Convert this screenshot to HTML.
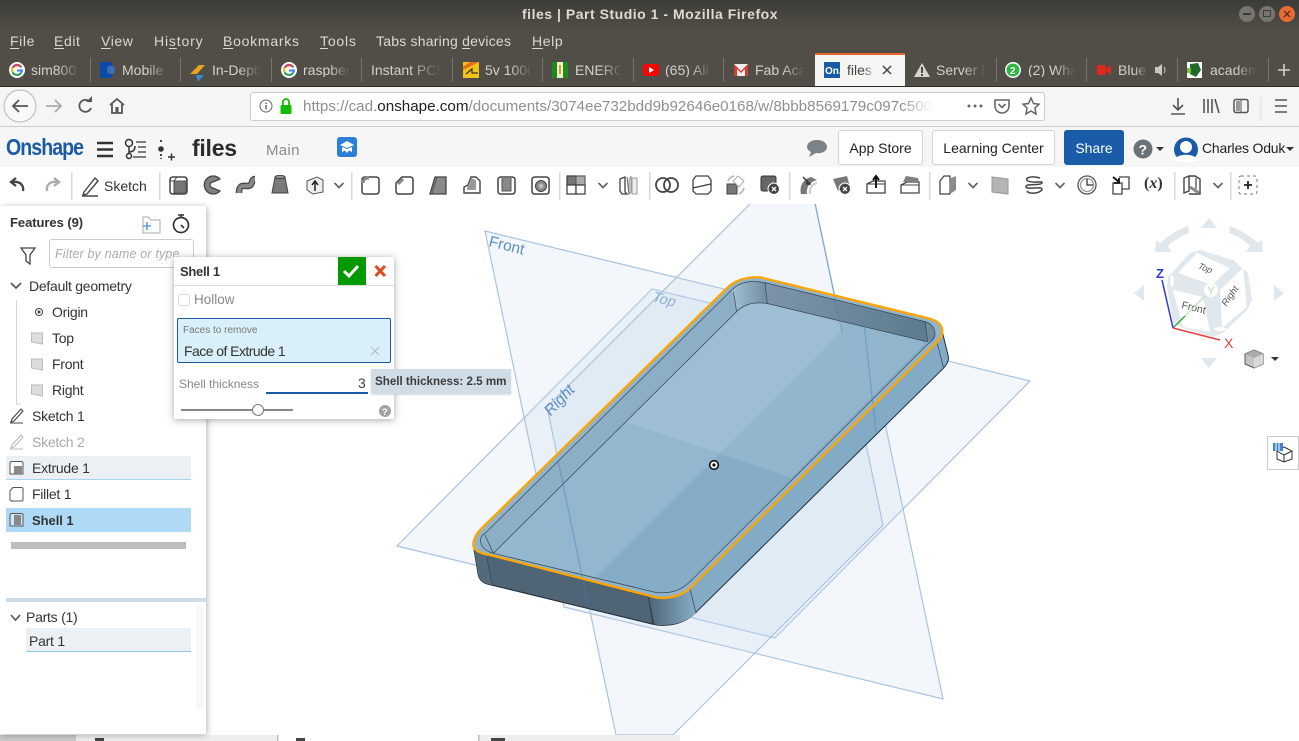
<!DOCTYPE html>
<html lang="en"><head><meta charset="utf-8"><title>files | Part Studio 1 - Mozilla Firefox</title>
<style>
html,body{margin:0;padding:0;width:1299px;height:741px;overflow:hidden;background:#fff;font-family:"Liberation Sans",sans-serif}
#w{position:relative;width:1299px;height:741px;overflow:hidden}
.a,.t{position:absolute}
.t{white-space:nowrap;line-height:1}
.m{color:#dcd9d0;font-size:14px;top:34px;letter-spacing:.6px}
.m u{text-decoration:underline;text-underline-offset:2px}
.tb{color:#d4d1c8;font-size:14px;top:63px;overflow:hidden;-webkit-mask-image:linear-gradient(90deg,#000 55%,transparent);mask-image:linear-gradient(90deg,#000 55%,transparent)}
.sep{position:absolute;top:58px;height:24px;width:1px;background:#77756d}
.f{font-size:14px;color:#333;letter-spacing:-.25px}
.r{position:absolute;background:#ebf0f5}
svg{position:absolute;overflow:visible}
.btn{position:absolute;top:130px;height:35px;box-sizing:border-box;border:1px solid #d3d3d3;border-radius:3px;background:#fff;color:#222;font-size:14px;text-align:center;line-height:34px}
</style></head><body><div id="w">

<!-- VIEWPORT -->
<svg style="left:0;top:0;overflow:hidden" width="1299" height="741" viewBox="0 0 1299 741">
<defs>
<clipPath id="vc"><rect x="0" y="204" width="1299" height="531"/></clipPath>
<clipPath id="fl"><path d="M100 880L830 155C850 135 875 125 920 130L1400 245L690 960C660 995 630 1000 590 998Z"/></clipPath>
<linearGradient id="c1" x1="0" x2="1" y1="0" y2="0"><stop offset="0" stop-color="#4f6475"/><stop offset="1" stop-color="#86aec8"/></linearGradient>
<linearGradient id="c2" x1="0" x2="1" y1="0" y2="0"><stop offset="0" stop-color="#a6c3d5"/><stop offset="1" stop-color="#6f8ca1"/></linearGradient>
<linearGradient id="c3" x1="0" x2="1" y1="0" y2="0"><stop offset="0" stop-color="#7d94a8"/><stop offset="1" stop-color="#5c7b8f"/></linearGradient>
</defs>
<g clip-path="url(#vc)">
<g fill="#c4d5ea" fill-opacity=".2" stroke="#a9c3e0" stroke-width="1.2">
<path d="M397 546L775 638L1030 381L652 289Z"/>
<path d="M485 231L864 323L943 699L564 607Z"/>
<path d="M547 407L804 150L883 525L673 735L616 735Z"/>
</g>
<g font-family="Liberation Sans,sans-serif" font-size="15.5" fill="#5d8fc6">
<text transform="translate(488 246) rotate(14)">Front</text>
<text transform="translate(651 301) rotate(14) skewX(-12)" font-size="14.5" fill="#8fb0d4">Top</text>
<text transform="translate(550 417) rotate(-46) skewX(-8)" font-size="15.5">Right</text>
</g>
<g transform="translate(460 260) scale(.33333)">
<path d="M40 855L55 945C60 965 75 972 95 975L590 1095C640 1100 680 1085 705 1060L1450 325C1462 312 1467 300 1465 290L1447 215L690 960L565 1010Z" fill="#83abc6" stroke="#1f2d38" stroke-width="3"/>
<path d="M40 855L55 945C60 965 75 972 95 975L580 1093L565 1010L90 885Z" fill="#4f6475" stroke="#1f2d38" stroke-width="3"/>
<path d="M565 1010L582 1093C625 1100 675 1090 708 1060L690 985Z" fill="url(#c1)"/>
<path d="M40 855L55 945C60 965 75 972 95 975L80 885Z" fill="#54697a"/>
<path d="M40 855C40 835 50 820 65 805L800 85C825 60 860 50 900 52L1405 175C1435 182 1447 195 1447 215C1447 228 1440 238 1425 252L695 980C670 1005 630 1018 590 1013L90 885C60 880 40 870 40 855Z" fill="#92b3c8"/>
<path d="M62 845C60 835 65 825 75 820L815 90C840 65 870 60 915 68L1395 185C1415 190 1425 205 1425 222C1425 232 1420 240 1400 255L690 965C660 995 630 1000 590 998L100 880C80 875 62 860 62 845Z" fill="#8dafc6"/>
<path d="M100 880L830 155C850 135 875 125 920 130L1400 245L690 960C660 995 630 1000 590 998Z" fill="#85adc8"/>
<g clip-path="url(#fl)">
<path d="M0 300L450 470L1075 680L1500 100L800 0Z" fill="#fff" fill-opacity=".1"/>
<path d="M1145 215L400 960L0 960L0 0L1145 0Z" fill="#fff" fill-opacity=".12"/>
</g>
<path d="M915 68L1395 185L1403 245L920 130Z" fill="url(#c3)"/>
<path d="M815 90C840 65 870 60 915 68L920 130C880 125 850 135 830 155Z" fill="url(#c2)"/>
<path d="M1395 185C1415 190 1425 205 1425 222C1425 232 1420 240 1400 248Z" fill="#6e8a9e"/>
<g fill="none" stroke="#34475a" stroke-width="2.200">
<path d="M62 845C60 835 65 825 75 820L815 90C840 65 870 60 915 68L1395 185C1415 190 1425 205 1425 222C1425 232 1420 240 1400 255L690 965C660 995 630 1000 590 998L100 880C80 875 62 860 62 845Z"/>
<path d="M100 880L830 155C850 135 875 125 920 130L1400 245"/>
<path d="M820 95L830 155M915 68L922 130M1395 185L1403 245M75 825L100 880M80 890L97 975M565 1010L582 1093M690 985L708 1060M1432 250L1450 322"/>
</g>
</g>
<g stroke="#3f7cc0" stroke-opacity=".42" stroke-width="1.2" fill="none">
<path d="M558 460L588 605M815 204L842 332M864 323L876 432"/>
</g>
<path transform="translate(460 260) scale(.33333)" d="M40 855C40 835 50 820 65 805L800 85C825 60 860 50 900 52L1405 175C1435 182 1447 195 1447 215C1447 228 1440 238 1425 252L695 980C670 1005 630 1018 590 1013L90 885C60 880 40 870 40 855Z" fill="none" stroke="#ffa500" stroke-width="7"/>
<circle cx="714" cy="465" r="4.3" fill="#fff" stroke="#111" stroke-width="1.6"/><circle cx="714" cy="465" r="1.6" fill="#111"/>

<!-- view cube -->
<g fill="#e0e8ee">
<path d="M1209 218L1217 228H1201Z"/><path d="M1134 293L1144 285V301Z"/><path d="M1284 293L1274 285V301Z"/><path d="M1209 368L1201 358H1217Z"/>
<path d="M1155 252L1156 240L1160 243C1170 234 1180 229 1188 226L1189 233C1181 236 1174 240 1168 246L1172 252Z"/>
<path d="M1263 252L1262 240L1258 243C1248 234 1238 229 1230 226L1229 233C1237 236 1244 240 1250 246L1246 252Z"/>
<path d="M1190 253L1200 250L1233 260L1248 273L1252 300L1247 310L1223 333L1213 337L1180 327L1173 323L1167 287L1168 277Z"/>
</g>
<g fill="#fff">
<path d="M1197 253L1230 268L1212 285L1178 273Z"/>
<path d="M1173 290L1203 297L1210 332L1183 327Z"/>
<path d="M1220 290L1243 268L1247 307L1222 328Z"/>
<circle cx="1211" cy="290" r="7"/>
<ellipse cx="1172" cy="281" rx="2" ry="6"/><ellipse cx="1220" cy="329" rx="6" ry="2"/><ellipse cx="1239" cy="262" rx="2" ry="6" transform="rotate(-30 1239 262)"/>
</g>
<g font-family="Liberation Sans,sans-serif" fill="#555">
<text transform="translate(1197 268) rotate(22) skewX(-12)" font-size="9">Top</text>
<text transform="translate(1181 308) rotate(14)" font-size="10.5">Front</text>
<text transform="translate(1226 307) rotate(-55) skewX(-8)" font-size="9.5">Right</text>
</g>
<path d="M1173 328L1205 296" stroke="#b6e3b0" stroke-width="1.2"/><path d="M1173 328L1185 316" stroke="#34b030" stroke-width="1.4"/>
<path d="M1173 328L1162 280" stroke="#3038d8" stroke-width="1.5"/><path d="M1173 328L1220 340" stroke="#e84040" stroke-width="1.5"/>
<g font-family="Liberation Sans,sans-serif" font-size="13" font-weight="bold">
<text x="1156" y="278" fill="#3038d8">Z</text><text x="1224" y="348" fill="#e84040" font-weight="normal" font-size="14">X</text><text x="1207" y="295" fill="#b6e3b0" font-weight="normal" font-size="12">Y</text>
</g>
<path d="M1254 350L1263 354V364L1254 368L1245 364V354Z" fill="#c4c4c4" stroke="#555"/><path d="M1254 358L1263 354V364L1254 368Z" fill="#d8d8d8"/><path d="M1245 354L1254 350L1263 354L1254 358Z" fill="#aaa"/>
<path d="M1271 357H1279L1275 361Z" fill="#333"/>
</g>

<!-- bottom tabs -->
<rect x="0" y="735" width="76" height="6" fill="#c9c9c9"/><rect x="76" y="735" width="201" height="6" fill="#eee"/><rect x="277" y="735" width="1.5" height="6" fill="#bbb"/><rect x="478" y="735" width="202" height="6" fill="#eee"/><rect x="478" y="735" width="1.5" height="6" fill="#bbb"/>
<rect x="95" y="738" width="9" height="3" fill="#444"/><rect x="296" y="738" width="9" height="3" fill="#444"/><rect x="491" y="738" width="14" height="3" fill="#444"/>
<rect x="1267.500" y="436.500" width="31" height="33" fill="#fff" stroke="#ccc"/>
<g fill="none" stroke="#333"><path d="M1277 451L1284 447L1292 451V459L1284 462L1277 459ZM1277 451L1284 455L1292 451M1284 455V462"/></g>
<rect x="1273" y="443" width="10" height="8" fill="#3f85cc"/><path d="M1276 443V451M1279 443V451" stroke="#fff"/>
</svg>

<!-- FIREFOX CHROME -->
<div class="a" style="left:0;top:0;width:1299px;height:87px;background:linear-gradient(#3c3b37,#504e46 30px,#504e46)"></div>
<div class="t" style="left:522px;top:7px;font-size:14px;font-weight:bold;color:#dfdbd2;letter-spacing:.52px">files | Part Studio 1 - Mozilla Firefox</div>
<svg style="left:1230px;top:4px" width="69" height="20">
<circle cx="17" cy="10" r="8" fill="#77756f"/><rect x="13" y="9" width="8" height="2" fill="#3d3c38"/>
<circle cx="37" cy="10" r="8" fill="#77756f"/><rect x="33.500" y="6.500" width="7" height="6" fill="none" stroke="#3d3c38"/>
<circle cx="57" cy="10" r="8" fill="#ea6a35"/><path d="M54 7L60 13M60 7L54 13" stroke="#4a2212" stroke-width="1.2"/>
</svg>
<div class="t m" style="left:10px"><u>F</u>ile</div>
<div class="t m" style="left:54px"><u>E</u>dit</div>
<div class="t m" style="left:101px"><u>V</u>iew</div>
<div class="t m" style="left:154px;letter-spacing:.85px">Hi<u>s</u>tory</div>
<div class="t m" style="left:223px;letter-spacing:.75px"><u>B</u>ookmarks</div>
<div class="t m" style="left:320px;letter-spacing:.8px"><u>T</u>ools</div>
<div class="t m" style="left:376px;letter-spacing:.22px">Tabs sharing <u>d</u>evices</div>
<div class="t m" style="left:532px"><u>H</u>elp</div>

<!-- tabs -->
<div class="sep" style="left:90px"></div><div class="sep" style="left:180px"></div><div class="sep" style="left:271px"></div><div class="sep" style="left:361px"></div><div class="sep" style="left:452px"></div><div class="sep" style="left:542px"></div><div class="sep" style="left:633px"></div><div class="sep" style="left:723px"></div><div class="sep" style="left:996px"></div><div class="sep" style="left:1086px"></div><div class="sep" style="left:1177px"></div><div class="sep" style="left:1268px"></div>
<div class="a" style="left:815px;top:53px;width:90px;height:34px;background:#f5f5f4;border-top:2px solid #e8642f;box-sizing:border-box"></div>
<div class="t tb" style="left:31px;width:49px">sim800 x</div>
<div class="t tb" style="left:122px;width:47px">Mobile x</div>
<div class="t tb" style="left:212px;width:49px">In-Depth</div>
<div class="t tb" style="left:303px;width:47px">raspberry</div>
<div class="t tb" style="left:371px;width:70px">Instant PCB</div>
<div class="t tb" style="left:485px;width:47px">5v 1000</div>
<div class="t tb" style="left:575px;width:47px">ENERGY</div>
<div class="t tb" style="left:665px;width:47px">(65) Ali</div>
<div class="t tb" style="left:755px;width:50px">Fab Acad</div>
<div class="t tb" style="left:847px;width:28px;color:#444;-webkit-mask-image:linear-gradient(90deg,#000 60%,transparent);mask-image:linear-gradient(90deg,#000 60%,transparent)">files</div>
<div class="t tb" style="left:936px;width:50px">Server N</div>
<div class="t tb" style="left:1028px;width:48px">(2) What</div>
<div class="t tb" style="left:1118px;width:30px">Blue J</div>
<div class="t tb" style="left:1210px;width:46px">academy</div>
<svg style="left:0;top:50px" width="1299" height="37">
<g fill="none" stroke-width="3">
<g id="g"><circle cx="17" cy="20" r="8" fill="#fff" stroke="none"/><path d="M21.500 17.500A5 5 0 1 0 22 20.500H17" stroke="#4285f4" stroke-width="2"/><path d="M13 17.500A5 5 0 0 1 21 17" stroke="#ea4335" stroke-width="2"/><path d="M12.600 22.500A5 5 0 0 1 12.600 17.500" stroke="#fbbc05" stroke-width="2"/><path d="M12.600 22.500A5 5 0 0 0 21 23" stroke="#34a853" stroke-width="2"/></g>
<use href="#g" x="272"/>
</g>
<rect x="100" y="12" width="12" height="16" fill="#0b4aa8"/><rect x="107" y="16" width="8" height="8" rx="3" fill="#3a6fb5"/>
<path d="M190 24L199 15H205L197 24Z" fill="#e8a21f"/><path d="M196 25H204L198 32Z" fill="#3a8ad0"/>
<rect x="463" y="12" width="16" height="16" fill="#f3c21c"/><path d="M463 28V20L479 12H470L463 17Z" fill="#e86a1a"/><path d="M466 24L472 19V23H478" stroke="#111" fill="none"/>
<rect x="552" y="12" width="16" height="16" fill="#1b8c1b"/><rect x="557" y="12" width="6" height="16" fill="#f5f1d0"/><rect x="559" y="15" width="2" height="9" fill="#c9a520"/>
<rect x="643" y="14" width="16" height="12" rx="3" fill="#f00"/><path d="M649 17L654 20L649 23Z" fill="#fff"/>
<rect x="734" y="14" width="14" height="12" fill="#eee"/><path d="M734 14L741 21L748 14V26H745V19L741 23L737 19V26H734Z" fill="#d43d30"/>
<rect x="824" y="12" width="16" height="16" fill="#1a5ba6"/><text x="825" y="24" font-family="Liberation Sans,sans-serif" font-weight="bold" font-size="10" fill="#fff">On.</text>
<path d="M883 16L891 24M891 16L883 24" stroke="#444" stroke-width="1.500"/>
<path d="M922 13L930 27H914Z" fill="#d8d5cc"/><rect x="921" y="17" width="2" height="6" fill="#4f4d46"/><rect x="921" y="24" width="2" height="2" fill="#4f4d46"/>
<circle cx="1013" cy="20" r="8" fill="#fff"/><circle cx="1013" cy="20" r="6.500" fill="#2cb742"/><text x="1010" y="24" font-family="Liberation Sans,sans-serif" font-weight="bold" font-size="10" fill="#fff">2</text>
<rect x="1097" y="15" width="9" height="10" fill="#d92a20"/><path d="M1106 19L1111 15V25L1106 21Z" fill="#d92a20"/>
<path d="M1155 17H1158L1162 14V26L1158 23H1155Z" fill="#c9c6be"/><path d="M1164 17Q1166 20 1164 23" stroke="#c9c6be" fill="none"/>
<rect x="1187" y="12" width="15" height="16" fill="#fff"/><path d="M1190 14L1198 13L1201 20L1196 27L1190 24Z" fill="#1d6b2c"/><path d="M1187 18H1191V23H1187Z" fill="#7fbe3d"/>
<path d="M1278 20H1290M1284 14V26" stroke="#d4d1c8" stroke-width="1.600"/>
</svg>

<!-- nav bar -->
<div class="a" style="left:0;top:86px;width:1299px;height:41px;background:#f5f5f4;border-top:1px solid #2c2b28;border-bottom:1px solid #ccc;box-sizing:border-box"></div>
<div class="a" style="left:250px;top:92px;width:795px;height:29px;box-sizing:border-box;background:#fff;border:1px solid #ccc;border-radius:3px"></div>
<div class="t" style="left:303px;top:99px;font-size:15.200px;color:#8f8f8f;width:630px;overflow:hidden;-webkit-mask-image:linear-gradient(90deg,#000 95%,transparent);mask-image:linear-gradient(90deg,#000 95%,transparent)">https://cad.<span style="color:#222">onshape.com</span>/documents/3074ee732bdd9b92646e0168/w/8bbb8569179c097c500</div>
<svg style="left:0;top:87px" width="1299" height="40">
<circle cx="20" cy="19" r="16" fill="#f8f8f8" stroke="#b5b5b5"/>
<path d="M28 19H13M19 13L13 19L19 25" fill="none" stroke="#555" stroke-width="1.800"/>
<path d="M61 19H46M55 13L61 19L55 25" fill="none" stroke="#aaa" stroke-width="1.800"/>
<path d="M90 15A6 6 0 1 0 91 21" fill="none" stroke="#555" stroke-width="1.800"/><path d="M86 15H92V9Z" fill="#555"/>
<path d="M110 18L117 12L124 18M112 17V26H122V17" fill="none" stroke="#555" stroke-width="1.800"/><rect x="115.500" y="20" width="3" height="6" fill="#555"/>
<circle cx="266" cy="19" r="6" fill="none" stroke="#666"/><rect x="265.300" y="18" width="1.500" height="4.500" fill="#666"/><rect x="265.300" y="15.500" width="1.500" height="1.500" fill="#666"/>
<rect x="280.500" y="18" width="11" height="9" rx="1" fill="#12bc00"/><path d="M283 18V15A3 3 0 0 1 289 15V18" fill="none" stroke="#12bc00" stroke-width="1.800"/>
<g fill="#666"><circle cx="969" cy="19" r="1.500"/><circle cx="975" cy="19" r="1.500"/><circle cx="981" cy="19" r="1.500"/></g>
<path d="M995 13H1009V19A7 7 0 0 1 995 19Z" fill="none" stroke="#666" stroke-width="1.600"/><path d="M998.500 17L1002 20.500L1005.500 17" fill="none" stroke="#666" stroke-width="1.600"/>
<path d="M1031 11L1033.500 16.500L1039 17.200L1035 21L1036 27L1031 24L1026 27L1027 21L1023 17.200L1028.500 16.500Z" fill="none" stroke="#666" stroke-width="1.500"/>
<path d="M1178 11V23M1173 18L1178 23L1183 18M1171 27H1185" fill="none" stroke="#555" stroke-width="1.600"/>
<path d="M1204 12V26M1208 12V26M1212 12V26M1215 12L1219 26" fill="none" stroke="#555" stroke-width="1.600"/>
<rect x="1234" y="12.500" width="14" height="13" rx="2" fill="none" stroke="#555" stroke-width="1.500"/><rect x="1236" y="14" width="4" height="10" fill="#999"/><path d="M1241 13V25" stroke="#555"/>
<path d="M1261 10V34" stroke="#ddd"/>
<path d="M1275 13H1287M1275 19H1287M1275 25H1287" stroke="#555" stroke-width="1.600"/>
</svg>

<!-- ONSHAPE HEADER -->
<div class="a" style="left:0;top:127px;width:1299px;height:40px;background:#f6f6f6"></div>
<div class="t" style="left:6px;top:136px;font-size:23px;font-weight:bold;color:#1b5ba6;letter-spacing:-1.100px;transform:scaleX(.85);transform-origin:0 0">Onshape</div>
<div class="t" style="left:192px;top:137px;font-size:23px;font-weight:bold;color:#2c2c2c;letter-spacing:-.25px">files</div>
<div class="t" style="left:266px;top:143px;font-size:15px;color:#8a8a8a;letter-spacing:.3px">Main</div>
<svg style="left:0;top:127px" width="1299" height="40">
<path d="M97 16H113M97 22.500H113M97 29H113" stroke="#333" stroke-width="2.600"/>
<circle cx="129" cy="16" r="3.500" fill="none" stroke="#333" stroke-width="1.500"/><circle cx="129" cy="29" r="2.500" fill="none" stroke="#333" stroke-width="1.500"/><path d="M129 19.500V26.500M129 25Q135 25 135 19" fill="none" stroke="#333" stroke-width="1.500"/><path d="M136 15H146M138 20H146M138 25H146M133 30H146" stroke="#555" stroke-width="1.500"/>
<circle cx="161" cy="22" r="2.800" fill="#333"/><path d="M161 13V17M161 27V32" stroke="#333" stroke-width="1.800" stroke-dasharray="2 2"/><path d="M168 30H175M171.500 26.500V33.500" stroke="#333" stroke-width="1.500"/>
<rect x="337" y="10" width="20" height="20" rx="3" fill="#2b7fd9"/><path d="M347 14L354 18L347 21L340 18ZM342 20V25L345 23.500L347 26L349 23.500L352 25V20L347 22Z" fill="#fff"/>
<path d="M817 13C823 13 827 16 827 20C827 24 822 27 816 26L809 30L811 25C809 24 807 22 807 20C807 16 811 13 817 13Z" fill="#7c8388"/>
<circle cx="1143" cy="22" r="9.500" fill="#6b7277"/><text x="1138.500" y="27.500" font-family="Liberation Sans,sans-serif" font-weight="bold" font-size="14" fill="#fff">?</text><path d="M1156 20H1164L1160 24Z" fill="#333"/>
<circle cx="1186" cy="22.500" r="12" fill="#1b5ba6"/><circle cx="1186" cy="20" r="6" fill="#fff"/><path d="M1175 33C1176 26 1196 26 1197 33C1193 36 1179 36 1175 33Z" fill="#fff"/>
<path d="M1286 20H1294L1290 24Z" fill="#333"/>
</svg>
<div class="btn" style="left:838px;width:85px">App Store</div>
<div class="btn" style="left:932px;width:123px">Learning Center</div>
<div class="btn" style="left:1064px;width:60px;background:#1b5ca8;color:#fff;border-color:#1b5ca8">Share</div>
<div class="t" style="left:1202px;top:141px;font-size:14px;color:#222;letter-spacing:-.2px">Charles Oduk</div>

<!-- TOOLBAR -->
<div class="a" style="left:0;top:167px;width:1299px;height:37px;background:#fff"></div>
<div class="t" style="left:104px;top:179px;font-size:14px;color:#333">Sketch</div>
<div class="t" style="left:1144px;top:176px;font-size:16px;font-weight:bold;font-family:'Liberation Serif',serif;color:#333">(<i>x</i>)</div>
<svg style="left:0;top:167px" width="1299" height="37">
<defs>
<path id="chv" d="M-4.500 -2L0 2.500L4.500 -2" fill="none" stroke="#666" stroke-width="1.700"/>
<path id="rs" d="M-8 -5Q-8 -8 -5 -8H6Q9 -8 9 -5V6Q9 9 6 9H-5Q-8 9 -8 6Z" fill="#fff" stroke="#444" stroke-width="1.500"/>
<g id="xb"><circle cx="5" cy="5" r="5" fill="#444"/><path d="M3 3L7 7M7 3L3 7" stroke="#fff" stroke-width="1.300"/></g>
</defs>
<g fill="#d8d8d8"><rect x="71" y="5" width="1.500" height="28"/><rect x="159" y="5" width="1.500" height="28"/><rect x="351" y="5" width="1.500" height="28"/><rect x="559" y="5" width="1.500" height="28"/><rect x="649" y="5" width="1.500" height="28"/><rect x="789" y="5" width="1.500" height="28"/><rect x="929" y="5" width="1.500" height="28"/><rect x="1174" y="5" width="1.500" height="28"/><rect x="1230" y="5" width="1.500" height="28"/></g>
<path d="M23 24C24 18 20 14 12 15M16 11L11 15L16 19" fill="none" stroke="#444" stroke-width="2.400"/>
<path d="M47 24C46 18 50 14 57 15M54 11L59 15L54 19" fill="none" stroke="#aaa" stroke-width="2.400"/>
<path d="M82 29H98M84 25L95 11L98 14L87 27L83 28Z" fill="none" stroke="#444" stroke-width="1.400"/>
<g transform="translate(178 18)"><use href="#rs"/><rect x="-4" y="-4" width="12" height="12" fill="#777" stroke="#555"/><path d="M-8 -4H-4V9M-4 -4L-1 -8" fill="none" stroke="#444"/></g>
<g transform="translate(212 18)"><path d="M8 -6A9 9 0 1 0 8 6L1 3A3 3 0 0 1 1 -3Z" fill="#808080" stroke="#444" stroke-width="1.300"/></g>
<g transform="translate(246 18)"><path d="M-7 8C-7 -1 -2 1 2 1C7 1 5 -6 9 -6" fill="none" stroke="#444" stroke-width="6.500"/><path d="M-7 8C-7 -1 -2 1 2 1C7 1 5 -6 9 -6" fill="none" stroke="#888" stroke-width="4"/></g>
<g transform="translate(280 18)"><path d="M-5 -8H5L8 8H-8Z" fill="#7a7a7a" stroke="#444"/><ellipse cx="0" cy="-8" rx="5" ry="1.500" fill="#999" stroke="#444"/></g>
<g transform="translate(315 18)"><path d="M-8 -4L2 -8L8 -5V7L-2 9L-8 5Z" fill="#eee" stroke="#555"/><path d="M0 6V-3M-3 0L0 -4L3 0" fill="none" stroke="#222" stroke-width="1.500"/></g>
<use href="#chv" x="339" y="18"/>
<g transform="translate(370 18)"><use href="#rs"/><path d="M-7 -2Q-7 -7 -1 -7" fill="none" stroke="#888" stroke-width="3"/></g>
<g transform="translate(404 18)"><path d="M-8 -2L-2 -8H6Q9 -8 9 -5V6Q9 9 6 9H-5Q-8 9 -8 6Z" fill="#fff" stroke="#444" stroke-width="1.500"/><path d="M-6 -1L-1 -6" stroke="#888" stroke-width="3"/></g>
<g transform="translate(438 18)"><path d="M-3 -8H8V9H-8Z" fill="#8a8a8a" stroke="#444" stroke-width="1.300"/><path d="M-1 -8L-6 9" stroke="#555"/></g>
<g transform="translate(472 18)"><path d="M-1 -8H4L8 -4V8H-8V2L-4 0Z" fill="#fff" stroke="#444" stroke-width="1.400"/><path d="M-1 -7L-5 3L-5 5L4 5L4 -5Z" fill="#999"/></g>
<g transform="translate(506 18)"><use href="#rs"/><path d="M-4 -7V6L5 6V-7" fill="#888" stroke="#555"/></g>
<g transform="translate(540 18)"><use href="#rs"/><circle cx="1" cy="1" r="5.500" fill="#888" stroke="#444"/><circle cx="1" cy="1" r="2.500" fill="#bbb"/></g>
<g transform="translate(576 18)"><rect x="-9" y="-9" width="9" height="9" fill="#777" stroke="#444" stroke-width="1.300"/><rect x="0" y="-9" width="9" height="9" fill="#aaa" stroke="#666" stroke-width="1.300"/><rect x="-9" y="0" width="9" height="9" fill="#fff" stroke="#444" stroke-width="1.300"/><rect x="0" y="0" width="9" height="9" fill="#fff" stroke="#444" stroke-width="1.300"/></g>
<use href="#chv" x="603" y="18"/>
<g transform="translate(628 18)"><path d="M-8 -6L-3 -8V7L-1 9H-6L-8 6Z" fill="#fff" stroke="#444" stroke-width="1.300"/><path d="M1 -5L3 -9V7L1 9ZM4 -7H9V9H4Z" fill="#eee" stroke="#999"/><path d="M-1 -8L1 9" stroke="#666"/></g>
<g transform="translate(667 18)" fill="none" stroke="#444" stroke-width="1.800"><circle cx="-4" r="7"/><circle cx="4" r="7"/></g>
<g transform="translate(702 18)" fill="#fff" stroke="#444" stroke-width="1.300"><path d="M-9 -5L-6 -9H6L9 -5V-1L-9 3Z"/><path d="M-9 3L9 -1V6L6 9H-6L-9 6Z"/></g>
<g transform="translate(736 18)"><rect x="-9" y="-1" width="10" height="10" fill="#777" stroke="#444"/><path d="M2 -9L8 -4L3 2L-3 -4Z" fill="#fff" stroke="#aaa"/><path d="M-8 -4A9 9 0 0 1 -2 -9M8 3A9 9 0 0 1 3 9" fill="none" stroke="#bbb" stroke-width="1.800"/></g>
<g transform="translate(770 18)"><rect x="-9" y="-9" width="15" height="15" rx="2" fill="#666" stroke="#333"/><use href="#xb" x="-1" y="-1"/><circle cx="4" cy="4" r="6" fill="none" stroke="#fff"/></g>
<g transform="translate(808 18)"><path d="M-7 9C-9 0 -4 -6 3 -8L9 -5C2 -3 -2 2 -1 9Z" fill="#777"/><path d="M2 9C1 4 4 -1 9 -2" fill="none" stroke="#ccc" stroke-width="2"/><path d="M-5 -8L1 -2M-1 -5V-1H3" fill="none" stroke="#333" stroke-width="1.400"/></g>
<g transform="translate(842 18)"><path d="M-9 -6L5 -9L8 2L-4 6Z" fill="#777"/><use href="#xb" x="-2" y="-1"/><circle cx="3" cy="4" r="6" fill="none" stroke="#fff"/></g>
<g transform="translate(876 18)"><path d="M-9 -1L-3 -4H9V8H-9Z" fill="#fff" stroke="#444" stroke-width="1.300"/><path d="M-9 -1L9 -1" stroke="#444"/><path d="M0 3V-8M-3 -5L0 -9L3 -5" fill="none" stroke="#111" stroke-width="1.900"/></g>
<g transform="translate(910 18)"><path d="M-9 0L-3 -3H9V8H-9Z" fill="#fff" stroke="#444" stroke-width="1.300"/><path d="M-9 0H9" stroke="#444"/><path d="M-7 -3L-4 -9L8 -7L9 -3Z" fill="#808080"/></g>
<g transform="translate(948 18)"><path d="M-8 -4L-4 -9H2V9H-8Z" fill="#fff" stroke="#444" stroke-width="1.300"/><path d="M1 -6L8 -9V5L2 9Z" fill="#8a8a8a"/></g>
<use href="#chv" x="973" y="18"/>
<g transform="translate(1000 18)"><path d="M-8 -8L8 -6V9L-8 7Z" fill="#b5b5b5" stroke="#999"/></g>
<g transform="translate(1034 18)" fill="none" stroke="#444" stroke-width="1.500"><path d="M6 -7C-5 -10 -10 -6 -6 -4C0 -1 9 -5 8 -2C6 1 -9 -2 -8 2C-7 5 7 1 8 4C8 8 -5 10 -7 6"/></g>
<use href="#chv" x="1060" y="18"/>
<g transform="translate(1087 18)" fill="none" stroke="#555" stroke-width="1.300"><circle r="9"/><circle r="6.500" stroke="#999"/><path d="M0 -6V0H6" stroke="#333"/></g>
<g transform="translate(1121 18)"><path d="M-8 -2H1V9H-8ZM-2 -8H8V4H1" fill="#fff" stroke="#444" stroke-width="1.300"/><path d="M-8 -8L-2 -3M-2 -7V-2H-7" fill="none" stroke="#111" stroke-width="1.800"/></g>
<g transform="translate(1192 18)"><path d="M-8 -7L-3 -9V6L-8 8ZM-3 -9H3L8 -6V9H-3" fill="#fff" stroke="#444" stroke-width="1.400"/><path d="M-2 2L7 8" stroke="#888" stroke-width="3"/><path d="M4 -7V4" stroke="#888" stroke-width="2"/></g>
<use href="#chv" x="1218" y="18"/>
<g transform="translate(1248 18)"><rect x="-9" y="-9" width="18" height="18" rx="2" fill="none" stroke="#777" stroke-dasharray="3 3"/><path d="M-4 0H4M0 -4V4" stroke="#222" stroke-width="1.800"/></g>
</svg>

<!-- LEFT PANEL -->
<div class="a" style="left:0;top:206px;width:206px;height:528px;background:#fff;box-shadow:1px 1px 6px rgba(0,0,0,.3)"></div>
<div class="t f" style="left:10px;top:216px;font-weight:bold;font-size:13px;color:#333;letter-spacing:-.05px">Features (9)</div>
<div class="a" style="left:49px;top:239px;width:145px;height:29px;box-sizing:border-box;border:1px solid #ccc;border-radius:3px;background:#fff"></div>
<div class="t" style="left:55px;top:248px;font-size:12.500px;font-style:italic;color:#aaa;letter-spacing:.17px">Filter by name or type</div>
<div class="t f" style="left:29px;top:279px">Default geometry</div>
<div class="t f" style="left:52px;top:305px">Origin</div>
<div class="t f" style="left:52px;top:331px">Top</div>
<div class="t f" style="left:52px;top:357px">Front</div>
<div class="t f" style="left:52px;top:383px">Right</div>
<div class="t f" style="left:32px;top:409px">Sketch 1</div>
<div class="t f" style="left:32px;top:435px;color:#aaa">Sketch 2</div>
<div class="r" style="left:6px;top:456px;width:185px;height:24px;border-bottom:1px solid #a8d6f2;box-sizing:border-box"></div>
<div class="t f" style="left:32px;top:461px">Extrude 1</div>
<div class="t f" style="left:32px;top:487px">Fillet 1</div>
<div class="r" style="left:6px;top:508px;width:185px;height:24px;background:#aedaf5"></div>
<div class="t f" style="left:32px;top:514px;font-weight:bold;font-size:13px;letter-spacing:-.05px">Shell 1</div>
<div class="a" style="left:11px;top:542px;width:175px;height:7px;background:#bdbdbd"></div>
<div class="a" style="left:6px;top:598px;width:200px;height:4px;background:#cfdde8"></div>
<div class="a" style="left:196px;top:606px;width:7px;height:104px;background:#f8f8f8"></div>
<div class="t f" style="left:26px;top:610px">Parts (1)</div>
<div class="r" style="left:26px;top:628px;width:165px;height:24px;border-bottom:1px solid #8fc8ea;box-sizing:border-box"></div>
<div class="t f" style="left:29px;top:634px">Part 1</div>
<svg style="left:0;top:206px" width="206" height="528">
<path d="M143 11H148L151 14H160V27H143Z" fill="none" stroke="#aaa"/><path d="M143 20H151M147 16V24" stroke="#5ba0dc" stroke-width="1.600"/>
<circle cx="181" cy="19" r="7.500" fill="none" stroke="#333" stroke-width="1.700"/><path d="M178 9H184M181 9V12M181 19L184 22" stroke="#333" stroke-width="1.600" fill="none"/>
<path d="M21 42H35L30 49V58L26 55V49Z" fill="none" stroke="#444" stroke-width="1.300"/>
<path d="M11 77L16 82L21 77" fill="none" stroke="#555" stroke-width="1.700"/>
<path d="M16.500 94V198H21" fill="none" stroke="#d5d5d5"/>
<circle cx="39" cy="106" r="3.500" fill="none" stroke="#444"/><circle cx="39" cy="106" r="1.500" fill="#444"/>
<g fill="#ddd" stroke="#bbb"><path d="M31.500 127H42.500V138L31.500 136Z"/><path d="M31.500 153H42.500V164L31.500 162Z"/><path d="M31.500 179H42.500V190L31.500 188Z"/></g>
<path d="M10 217H23M12 213L21 203L23 205L14 215L11 216Z" fill="none" stroke="#444" stroke-width="1.100"/>
<path d="M10 243H23M12 239L21 229L23 231L14 241L11 242Z" fill="none" stroke="#bbb" stroke-width="1.100"/>
<g transform="translate(16 262)"><path d="M-6 -5Q-6 -6.500 -4 -6.500H5Q7 -6.500 7 -5V6H-6Z" fill="#fff" stroke="#555"/><rect x="-2" y="-2" width="8" height="8" fill="#888"/></g>
<g transform="translate(16 288)"><path d="M-6 -3L-3 -6.500H5Q7 -6.500 7 -5V6Q7 7 5 7H-4Q-6 7 -6 5Z" fill="#fff" stroke="#555"/></g>
<g transform="translate(16 314)"><path d="M-6 -5Q-6 -6.500 -4 -6.500H5Q7 -6.500 7 -5V6H-6Z" fill="#cfe7f6" stroke="#555"/><rect x="-2" y="-5" width="7" height="10" fill="#888"/></g>
<path d="M11 409L15.500 414L20 409" fill="none" stroke="#555" stroke-width="1.600"/>
</svg>

<!-- DIALOG -->
<div class="a" style="left:174px;top:257px;width:220px;height:162px;background:#fff;box-shadow:0 1px 7px rgba(0,0,0,.35)"></div>
<div class="t" style="left:180px;top:265px;font-size:13px;font-weight:bold;color:#333;letter-spacing:-.3px">Shell 1</div>
<div class="a" style="left:338px;top:257px;width:28px;height:28px;background:#009a00"></div>
<div class="a" style="left:174px;top:285px;width:220px;height:1px;background:#ddd"></div>
<div class="a" style="left:178px;top:294px;width:12px;height:12px;box-sizing:border-box;border:1px solid #ddd;border-radius:2px;background:#fff"></div>
<div class="t" style="left:194px;top:293px;font-size:13.500px;color:#888">Hollow</div>
<div class="a" style="left:177px;top:318px;width:214px;height:45px;box-sizing:border-box;background:#d9eff9;border:1px solid #1a5aa6;border-radius:2px"></div>
<div class="t" style="left:183px;top:326px;font-size:10px;color:#777">Faces to remove</div>
<div class="t f" style="left:184px;top:344px;color:#333;letter-spacing:-.55px">Face of Extrude 1</div>
<div class="t" style="left:179px;top:378px;font-size:12px;color:#888">Shell thickness</div>
<div class="a" style="left:266px;top:392px;width:102px;height:2px;background:#1a5aa6"></div>
<div class="t" style="left:358px;top:376px;font-size:14px;color:#444">3</div>
<div class="a" style="left:371px;top:369px;width:140px;height:25px;background:#d0dce6;box-shadow:0 1px 2px rgba(0,0,0,.15)"></div>
<div class="t" style="left:375px;top:376px;font-size:11.600px;font-weight:bold;color:#3c3c3c">Shell thickness: 2.5 mm</div>
<svg style="left:174px;top:257px" width="220" height="162">
<path d="M170 14L175 19L184 9" fill="none" stroke="#fff" stroke-width="3"/>
<path d="M201.500 9L211 19M211 9L201.500 19" stroke="#e04a1f" stroke-width="3"/>
<path d="M197 90L205 98M205 90L197 98" stroke="#bbb"/>
<path d="M7 153H119" stroke="#777" stroke-width="1.700"/>
<circle cx="84" cy="153" r="5.500" fill="#fff" stroke="#777"/>
<circle cx="211" cy="154" r="6" fill="#a2a2a2"/><text x="208" y="158" font-family="Liberation Sans,sans-serif" font-weight="bold" font-size="9.500" fill="#fff">?</text>
</svg>
</div></body></html>
